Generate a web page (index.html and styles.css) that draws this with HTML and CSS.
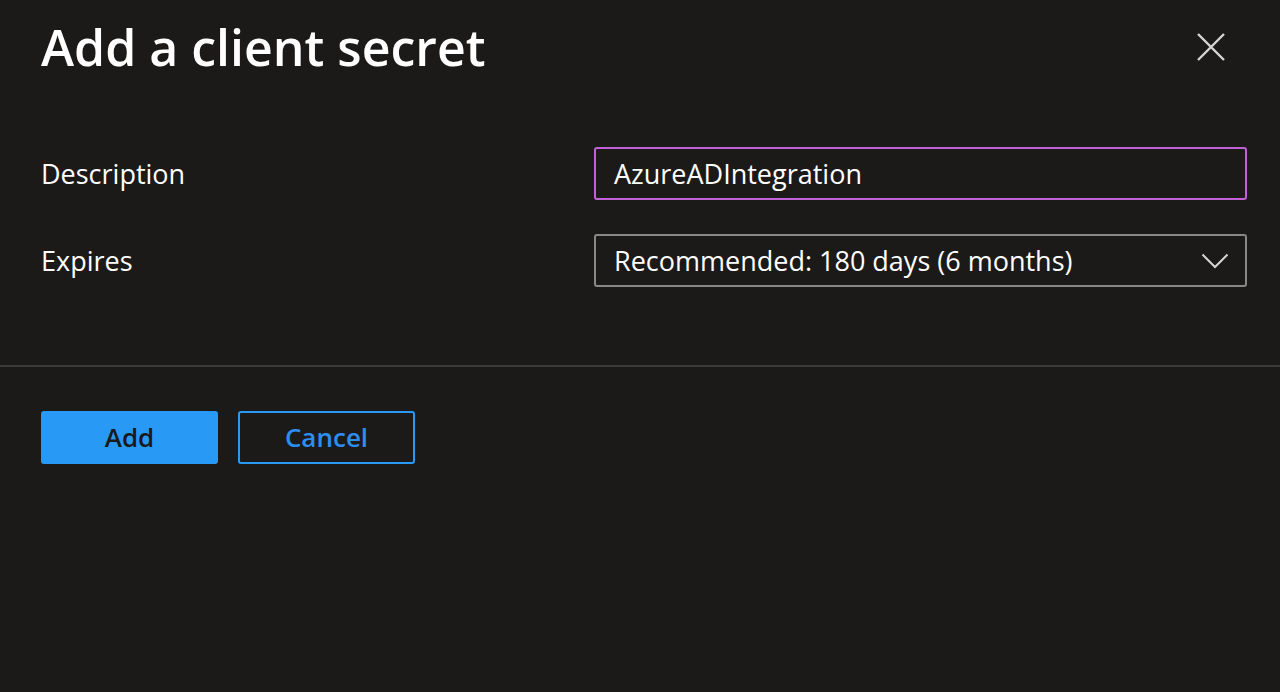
FILE: index.html
```html
<!DOCTYPE html>
<html>
<head>
<meta charset="utf-8">
<link rel="stylesheet" href="styles.css">
</head>
<body>
<div class="panel">
  <header class="head">
    <h1 class="title">Add a client secret</h1>
    <button class="close" aria-label="Close">
      <svg width="30" height="30" viewBox="0 0 30 30"><path d="M2 2 L28 28 M28 2 L2 28" stroke="#d6d6d6" stroke-width="2.4" fill="none"/></svg>
    </button>
  </header>
  <div class="form">
    <div class="row">
      <label class="label">Description</label>
      <div class="field focused">AzureADIntegration</div>
    </div>
    <div class="row">
      <label class="label">Expires</label>
      <div class="field select">
        <span>Recommended: 180 days (6 months)</span>
        <svg width="28" height="16" viewBox="0 0 28 16"><path d="M1.5 1.5 L14 14 L26.5 1.5" stroke="#d6d6d6" stroke-width="2" fill="none"/></svg>
      </div>
    </div>
  </div>
  <div class="divider"></div>
  <div class="actions">
    <button class="btn primary">Add</button>
    <button class="btn secondary">Cancel</button>
  </div>
</div>
</body>
</html>
```
FILE: styles.css
```css
html, body {
  margin: 0;
  padding: 0;
  background: #1b1a19;
  height: 100%;
}
body {
  font-family: "Open Sans", "Noto Sans", "Liberation Sans", sans-serif;
  color: #ffffff;
}
.panel {
  width: 1280px;
  height: 692px;
  overflow: hidden;
}
.head {
  display: flex;
  justify-content: space-between;
  align-items: flex-start;
  padding: 14px 54px 0 41px;
  height: 133px;
  box-sizing: border-box;
}
.title {
  margin: 0;
  font-size: 50px;
  font-weight: 600;
  letter-spacing: 0;
  line-height: 66px;
  color: #ffffff;
}
.close {
  background: none;
  border: none;
  padding: 0;
  margin-top: 18px;
  width: 30px;
  height: 30px;
  cursor: pointer;
}
.form {
  display: flex;
  flex-direction: column;
  gap: 34px;
  padding: 14px 33px 0 41px;
  height: 232px;
  box-sizing: border-box;
}
.row {
  display: flex;
  align-items: center;
  justify-content: space-between;
}
.label {
  font-size: 27px;
  color: #ffffff;
}
.field {
  width: 653px;
  height: 53px;
  box-sizing: border-box;
  border: 2px solid #8a8886;
  border-radius: 3px;
  display: flex;
  align-items: center;
  padding: 0 16px 0 18px;
  font-size: 27px;
  color: #ffffff;
}
.field.focused {
  border-color: #c161d8;
}
.field.select {
  justify-content: space-between;
}
.divider {
  height: 2px;
  background: #3b3a39;
}
.actions {
  display: flex;
  gap: 20px;
  padding: 44px 0 0 41px;
}
.btn {
  width: 177px;
  height: 53px;
  box-sizing: border-box;
  border-radius: 3px;
  font-family: "Open Sans", "Noto Sans", sans-serif;
  font-size: 26px;
  font-weight: 600;
  cursor: pointer;
  padding: 0 0 2px 0;
}
.primary {
  background: #2899f5;
  border: 2px solid #2899f5;
  color: #1b1a19;
}
.secondary {
  background: transparent;
  border: 2px solid #2899f5;
  color: #2d8ef0;
}
```
